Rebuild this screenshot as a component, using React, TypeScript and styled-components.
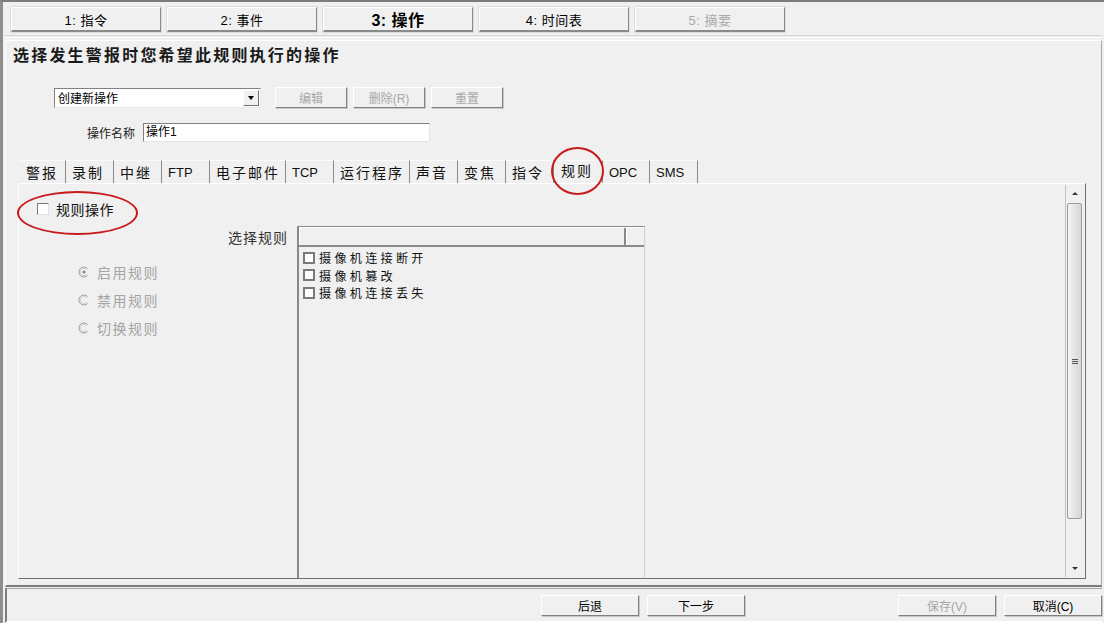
import styled, { createGlobalStyle } from 'styled-components';

const GlobalStyle = createGlobalStyle`
  * { box-sizing: border-box; }
  body {
    margin: 0;
    background: #f0f0f0;
    font-family: 'Liberation Sans', 'Noto Sans CJK SC', sans-serif;
    font-size: 12px;
    color: #000;
  }
`;

const Screen = styled.div`
  position: relative;
  width: 1104px;
  height: 623px;
  overflow: hidden;
  background: #f0f0f0;
`;

const Frame = styled.div`
  display: flex;
  flex-direction: column;
  height: 100%;
  border-top: 2px solid #7c7c7c;
  border-left: 3px solid #8e8e8e;
`;

const StepBar = styled.div`
  display: flex;
  gap: 6px;
  padding: 5px 0 0 8px;
`;

const StepButton = styled.div<{ $active?: boolean; $disabled?: boolean }>`
  width: 150px;
  height: 25px;
  display: flex;
  align-items: center;
  justify-content: center;
  background: #f0f0f0;
  border-top: 1px solid #fff;
  border-left: 1px solid #fff;
  border-right: 1px solid #8a8a8a;
  border-bottom: 2px solid #8a8a8a;
  box-shadow: 0 0 0 1px #dcdcdc;
  font-size: ${(p) => (p.$active ? '16px' : '13px')};
  font-weight: ${(p) => (p.$active ? 700 : 400)};
  color: ${(p) => (p.$disabled ? '#a8a8a8' : '#000')};
  letter-spacing: 0.5px;
`;

const Separator = styled.div`
  margin: 3px 2px 0 2px;
  height: 3px;
  border-top: 1px solid #d4d4d4;
  border-bottom: 1px solid #fff;
`;

const MainPanel = styled.div`
  flex: 1;
  display: flex;
  flex-direction: column;
  margin: 2px 2px 0 2px;
  border-top: 1px solid #fff;
  border-left: 1px solid #fff;
  border-right: 1px solid #a8a8a8;
  border-bottom: 2px solid #7c7c7c;
  min-height: 0;
`;

const Title = styled.div`
  margin: 5px 0 0 7px;
  height: 20px;
  line-height: 20px;
  font-size: 16px;
  font-weight: 700;
  letter-spacing: 2.2px;
  color: #1a1a1a;
`;

const ActionRow = styled.div`
  display: flex;
  align-items: center;
  gap: 6px;
  margin: 21px 0 0 48px;
  height: 21px;
`;

const Combo = styled.div`
  width: 207px;
  height: 20px;
  margin-right: 8px;
  display: flex;
  align-items: center;
  background: #fff;
  border-top: 1px solid #808080;
  border-left: 1px solid #808080;
  border-right: 1px solid #e8e8e8;
  border-bottom: 1px solid #e8e8e8;
  padding: 1px;
`;

const ComboText = styled.span`
  flex: 1;
  padding-left: 2px;
  font-size: 12px;
`;

const ComboArrow = styled.div`
  width: 16px;
  height: 16px;
  display: flex;
  align-items: center;
  justify-content: center;
  background: #f0f0f0;
  border-top: 1px solid #fff;
  border-left: 1px solid #fff;
  border-right: 1px solid #707070;
  border-bottom: 1px solid #707070;

  &::after {
    content: '';
    border-left: 3px solid transparent;
    border-right: 3px solid transparent;
    border-top: 4px solid #000;
  }
`;

const PushButton = styled.div<{ $width?: number; $disabled?: boolean }>`
  width: ${(p) => p.$width ?? 72}px;
  height: 21px;
  display: flex;
  align-items: center;
  justify-content: center;
  background: #f0f0f0;
  border-top: 1px solid #fff;
  border-left: 1px solid #fff;
  border-right: 1px solid #808080;
  border-bottom: 1px solid #808080;
  box-shadow: 1px 1px 0 #c8c8c8;
  font-size: 12px;
  color: ${(p) => (p.$disabled ? '#a8a8a8' : '#000')};
`;

const NameRow = styled.div`
  display: flex;
  align-items: center;
  gap: 8px;
  margin: 15px 0 0 81px;
  height: 19px;
`;

const FieldLabel = styled.span`
  font-size: 12px;
  color: #222;
`;

const TextInput = styled.div`
  width: 287px;
  height: 19px;
  background: #fff;
  border-top: 1px solid #808080;
  border-left: 1px solid #808080;
  border-right: 1px solid #e4e4e4;
  border-bottom: 1px solid #e4e4e4;
  padding-left: 2px;
  line-height: 17px;
  font-size: 12px;
`;

const TabStrip = styled.div`
  display: flex;
  margin: 18px 0 0 14px;
  height: 23px;
`;

const Tab = styled.div<{ $width: number; $latin?: boolean; $selected?: boolean }>`
  width: ${(p) => p.$width}px;
  height: 23px;
  display: flex;
  align-items: center;
  padding: ${(p) => (p.$selected ? '0 0 4px 7px' : '0 0 0 6px')};
  border-right: 1px solid #8a8a8a;
  border-top: 1px solid #fafafa;
  font-family: ${(p) =>
    p.$latin ? "'Liberation Sans', sans-serif" : "'Noto Sans CJK SC', sans-serif"};
  font-size: ${(p) => (p.$latin ? '13px' : '14px')};
  letter-spacing: ${(p) => (p.$latin ? '0' : '2px')};
  color: #111;
`;

const TabPanel = styled.div`
  flex: 1;
  display: flex;
  margin: 0 15px 6px 12px;
  border-top: 1px solid #fff;
  border-left: 1px solid #fff;
  border-right: 1px solid #707070;
  border-bottom: 1px solid #707070;
  min-height: 0;
`;

const LeftCol = styled.div`
  width: 209px;
  padding: 17px 0 0 18px;
  display: flex;
  flex-direction: column;
`;

const CheckRow = styled.div`
  display: flex;
  align-items: center;
  gap: 7px;
  height: 16px;
  font-size: 14px;
  font-family: 'Noto Sans CJK SC', sans-serif;
  letter-spacing: 0.5px;
  color: #111;
`;

const ClassicCheck = styled.span`
  width: 12px;
  height: 12px;
  background: #fff;
  border-top: 1px solid #7a7a7a;
  border-left: 1px solid #7a7a7a;
  border-right: 1px solid #e0e0e0;
  border-bottom: 1px solid #e0e0e0;
`;

const RadioGroup = styled.div`
  display: flex;
  flex-direction: column;
  margin: 41px 0 0 41px;
`;

const RadioRow = styled.div`
  display: flex;
  align-items: center;
  gap: 7px;
  height: 28px;
  font-size: 14px;
  font-family: 'Noto Sans CJK SC', sans-serif;
  letter-spacing: 1.5px;
  color: #a4a4a4;
`;

const RuleArea = styled.div`
  display: flex;
  gap: 9px;
  margin-top: 42px;
`;

const RuleLabel = styled.div`
  width: 60px;
  margin-top: 2px;
  font-size: 14px;
  font-family: 'Noto Sans CJK SC', sans-serif;
  letter-spacing: 1px;
  color: #333;
  line-height: 18px;
`;

const ListBox = styled.div`
  width: 348px;
  display: flex;
  flex-direction: column;
  border-top: 1px solid #8a8a8a;
  border-left: 2px solid #8a8a8a;
  border-right: 1px solid #d0d0d0;
`;

const ListHeader = styled.div`
  display: flex;
  height: 20px;
  border-bottom: 2px solid #8a8a8a;
  border-top: 1px solid #fff;
`;

const HeaderCell = styled.div<{ $grow?: boolean }>`
  ${(p) => (p.$grow ? 'flex: 1;' : 'width: 327px; border-right: 2px solid #8a8a8a;')}
  box-shadow: inset 1px 0 #fff;
`;

const ListItems = styled.div`
  display: flex;
  flex-direction: column;
  padding: 2px 0 0 4px;
`;

const ListItem = styled.div`
  display: flex;
  align-items: center;
  gap: 4px;
  height: 17.5px;
  line-height: 17px;
  font-family: 'Noto Sans CJK SC', sans-serif;
  font-size: 12.1px;
  letter-spacing: 3.3px;
  color: #111;
`;

const ItemBox = styled.span`
  width: 12px;
  height: 12px;
  background: #fff;
  border: 2px solid #7a7a7a;
`;

const Scrollbar = styled.div`
  margin: 1px 1px 1px auto;
  width: 19px;
  display: flex;
  flex-direction: column;
  align-items: center;
  border-left: 1px solid #c4c4c4;
`;

const ArrowCell = styled.div<{ $down?: boolean }>`
  height: 17px;
  width: 100%;
  display: flex;
  align-items: center;
  justify-content: center;

  &::after {
    content: '';
    border-left: 3px solid transparent;
    border-right: 3px solid transparent;
    ${(p) => (p.$down ? 'border-top: 3px solid #333;' : 'border-bottom: 3px solid #333;')}
  }
`;

const Track = styled.div`
  flex: 1;
  width: 100%;
  padding: 1px 2px 41px 1px;
  display: flex;
`;

const Thumb = styled.div`
  flex: 1;
  display: flex;
  align-items: center;
  justify-content: center;
  border: 1px solid #9c9c9c;
  border-radius: 2px;
  background: linear-gradient(to right, #f4f4f4, #e4e4e4 50%, #d6d6d6);
`;

const Grip = styled.div`
  width: 6px;
  height: 5px;
  border-top: 1px solid #555;
  border-bottom: 1px solid #555;
  position: relative;

  &::after {
    content: '';
    position: absolute;
    left: 0;
    right: 0;
    top: 1px;
    border-top: 1px solid #555;
  }
`;

const BottomBar = styled.div`
  height: 35px;
  margin: 1px 2px 0 2px;
  display: flex;
  justify-content: flex-end;
  gap: 8px;
  padding-top: 6px;
  border-top: 1px solid #a8a8a8;
  border-left: 2px solid #7c7c7c;
  border-bottom: 2px solid #fff;
`;

const NavGroup = styled.div`
  display: flex;
  gap: 8px;
  margin-right: 145px;
`;

// red hand-drawn markers laid over the screenshot
const Annotation = styled.div<{ $x: number; $y: number; $w: number; $h: number }>`
  position: absolute;
  left: ${(p) => p.$x}px;
  top: ${(p) => p.$y}px;
  width: ${(p) => p.$w}px;
  height: ${(p) => p.$h}px;
  border: 2px solid #c81a1a;
  border-radius: 50%;
  pointer-events: none;
`;

function Radio({ checked }: { checked?: boolean }) {
  return (
    <svg width="12" height="12" viewBox="0 0 12 12">
      <path d="M9.5 2.5 A5 5 0 1 0 9.5 9.5" fill="none" stroke="#9a9a9a" strokeWidth="1" />
      <path d="M8.5 3.5 A3.6 3.6 0 1 0 8.5 8.5" fill="none" stroke="#d0d0d0" strokeWidth="1" />
      {checked && <circle cx="6" cy="6" r="1.6" fill="#8a8a8a" />}
    </svg>
  );
}

const tabs = [
  { label: '警报', w: 46 },
  { label: '录制', w: 48 },
  { label: '中继', w: 48 },
  { label: 'FTP', w: 48, latin: true },
  { label: '电子邮件', w: 76 },
  { label: 'TCP', w: 48, latin: true },
  { label: '运行程序', w: 76 },
  { label: '声音', w: 48 },
  { label: '变焦', w: 48 },
  { label: '指令', w: 48 },
  { label: '规则', w: 49, selected: true },
  { label: 'OPC', w: 47, latin: true },
  { label: 'SMS', w: 48, latin: true },
];

const rules = ['摄像机连接断开', '摄像机篡改', '摄像机连接丢失'];

export default function App() {
  return (
    <Screen>
      <GlobalStyle />
      <Frame>
        <StepBar>
          <StepButton>1: 指令</StepButton>
          <StepButton>2: 事件</StepButton>
          <StepButton $active>3: 操作</StepButton>
          <StepButton>4: 时间表</StepButton>
          <StepButton $disabled>5: 摘要</StepButton>
        </StepBar>
        <Separator />
        <MainPanel>
          <Title>选择发生警报时您希望此规则执行的操作</Title>
          <ActionRow>
            <Combo>
              <ComboText>创建新操作</ComboText>
              <ComboArrow />
            </Combo>
            <PushButton $disabled>编辑</PushButton>
            <PushButton $disabled>删除(R)</PushButton>
            <PushButton $disabled>重置</PushButton>
          </ActionRow>
          <NameRow>
            <FieldLabel>操作名称</FieldLabel>
            <TextInput>操作1</TextInput>
          </NameRow>
          <TabStrip>
            {tabs.map((t) => (
              <Tab key={t.label} $width={t.w} $latin={t.latin} $selected={t.selected}>
                {t.label}
              </Tab>
            ))}
          </TabStrip>
          <TabPanel>
            <LeftCol>
              <CheckRow>
                <ClassicCheck />
                规则操作
              </CheckRow>
              <RadioGroup>
                <RadioRow>
                  <Radio checked />
                  启用规则
                </RadioRow>
                <RadioRow>
                  <Radio />
                  禁用规则
                </RadioRow>
                <RadioRow>
                  <Radio />
                  切换规则
                </RadioRow>
              </RadioGroup>
            </LeftCol>
            <RuleArea>
              <RuleLabel>选择规则</RuleLabel>
              <ListBox>
                <ListHeader>
                  <HeaderCell />
                  <HeaderCell $grow />
                </ListHeader>
                <ListItems>
                  {rules.map((r) => (
                    <ListItem key={r}>
                      <ItemBox />
                      {r}
                    </ListItem>
                  ))}
                </ListItems>
              </ListBox>
            </RuleArea>
            <Scrollbar>
              <ArrowCell />
              <Track>
                <Thumb>
                  <Grip />
                </Thumb>
              </Track>
              <ArrowCell $down />
            </Scrollbar>
          </TabPanel>
        </MainPanel>
        <BottomBar>
          <NavGroup>
            <PushButton $width={98}>后退</PushButton>
            <PushButton $width={98}>下一步</PushButton>
          </NavGroup>
          <PushButton $width={98} $disabled>
            保存(V)
          </PushButton>
          <PushButton $width={98}>取消(C)</PushButton>
        </BottomBar>
      </Frame>
      <Annotation $x={17} $y={191} $w={121} $h={44} />
      <Annotation $x={551} $y={147} $w={53} $h={48} />
    </Screen>
  );
}
